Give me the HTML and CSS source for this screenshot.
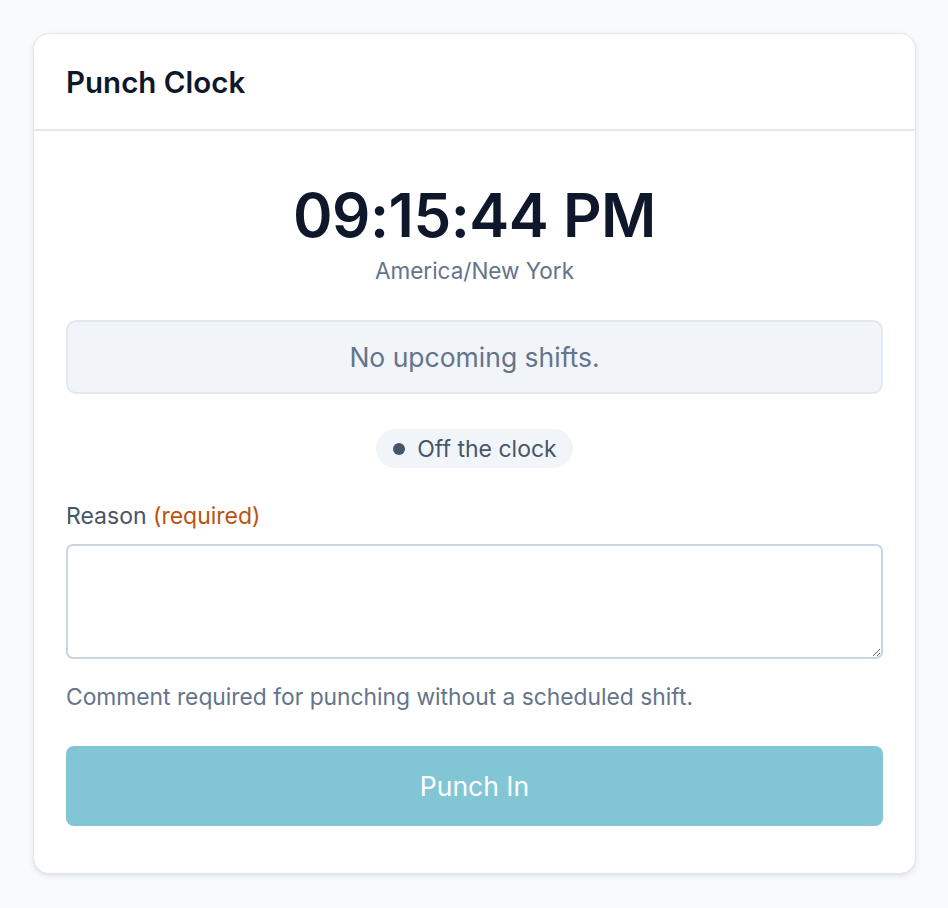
FILE: index.html
```html
<!DOCTYPE html>
<html lang="en">
<head>
<meta charset="utf-8">
<title>Punch Clock</title>
<link rel="stylesheet" href="styles.css">
</head>
<body>
<main class="page">
  <section class="card">
    <header class="card-header">
      <h1 class="card-title">Punch Clock</h1>
    </header>
    <div class="card-body">
      <div class="clock">
        <div class="clock-time">09:15:44 PM</div>
        <div class="clock-zone">America/New York</div>
      </div>
      <div class="notice">No upcoming shifts.</div>
      <div class="status-row">
        <span class="status-pill"><span class="status-dot"></span>Off the clock</span>
      </div>
      <div class="field">
        <label class="field-label" for="reason">Reason <span class="required">(required)</span></label>
        <textarea id="reason" class="field-input"></textarea>
        <p class="field-help">Comment required for punching without a scheduled shift.</p>
      </div>
      <button class="punch-btn" type="button">Punch In</button>
    </div>
  </section>
</main>
</body>
</html>
```

FILE: styles.css
```css
* { box-sizing: border-box; }
html, body { margin: 0; padding: 0; }
body {
  background: #f8fafc;
  font-family: Inter, "Noto Sans", sans-serif;
  color: #0f172a;
}
.page {
  padding: 33px 32px 33px 33px;
}
.card {
  background: #ffffff;
  border: 1px solid #e2e8f0;
  border-radius: 16px;
  box-shadow: 0 2px 6px rgba(15, 23, 42, 0.08), 0 1px 2px rgba(15, 23, 42, 0.05);
  width: 883px;
}
.card-header {
  height: 97px;
  padding: 0 32px;
  display: flex;
  align-items: center;
  border-bottom: 2px solid #e2e8f0;
}
.card-title {
  margin: 0;
  font-size: 29.5px;
  font-weight: 600;
  color: #0f172a;
}
.card-body {
  padding: 51px 32px 47px;
  display: flex;
  flex-direction: column;
}
.clock {
  display: flex;
  flex-direction: column;
  align-items: center;
}
.clock-time {
  font-size: 60px;
  font-weight: 600;
  line-height: 66px;
  color: #0f172a;
  letter-spacing: -0.5px;
}
.clock-zone {
  margin-top: 8px;
  font-size: 22.5px;
  line-height: 30px;
  color: #64748b;
}
.notice {
  margin-top: 34px;
  height: 74px;
  display: flex;
  align-items: center;
  justify-content: center;
  background: #f1f5f9;
  border: 2px solid #e2e8f0;
  border-radius: 10px;
  font-size: 26.5px;
  color: #64748b;
}
.status-row {
  margin-top: 35px;
  display: flex;
  justify-content: center;
}
.status-pill {
  display: inline-flex;
  align-items: center;
  gap: 12px;
  height: 39px;
  padding: 0 16px 0 17px;
  border-radius: 999px;
  background: #f1f5f9;
  color: #475569;
  font-size: 23px;
}
.status-dot {
  width: 12px;
  height: 12px;
  border-radius: 50%;
  background: #475569;
}
.field {
  margin-top: 33px;
  display: flex;
  flex-direction: column;
}
.field-label {
  font-size: 23px;
  color: #475569;
  line-height: 30px;
}
.required {
  color: #b9530f;
}
.field-input {
  margin-top: 13px;
  height: 115px;
  width: 100%;
  border: 2px solid #cbd5e1;
  border-radius: 7px;
  background: #ffffff;
  font: inherit;
  padding: 10px 14px;
  resize: vertical;
}
.field-help {
  margin: 23px 0 0;
  font-size: 22.8px;
  color: #64748b;
  line-height: 30px;
}
.punch-btn {
  margin-top: 34px;
  height: 80px;
  width: 100%;
  border: none;
  border-radius: 8px;
  background: #82c6d6;
  color: #ffffff;
  font-family: inherit;
  font-size: 26.5px;
  font-weight: 400;
}
```
